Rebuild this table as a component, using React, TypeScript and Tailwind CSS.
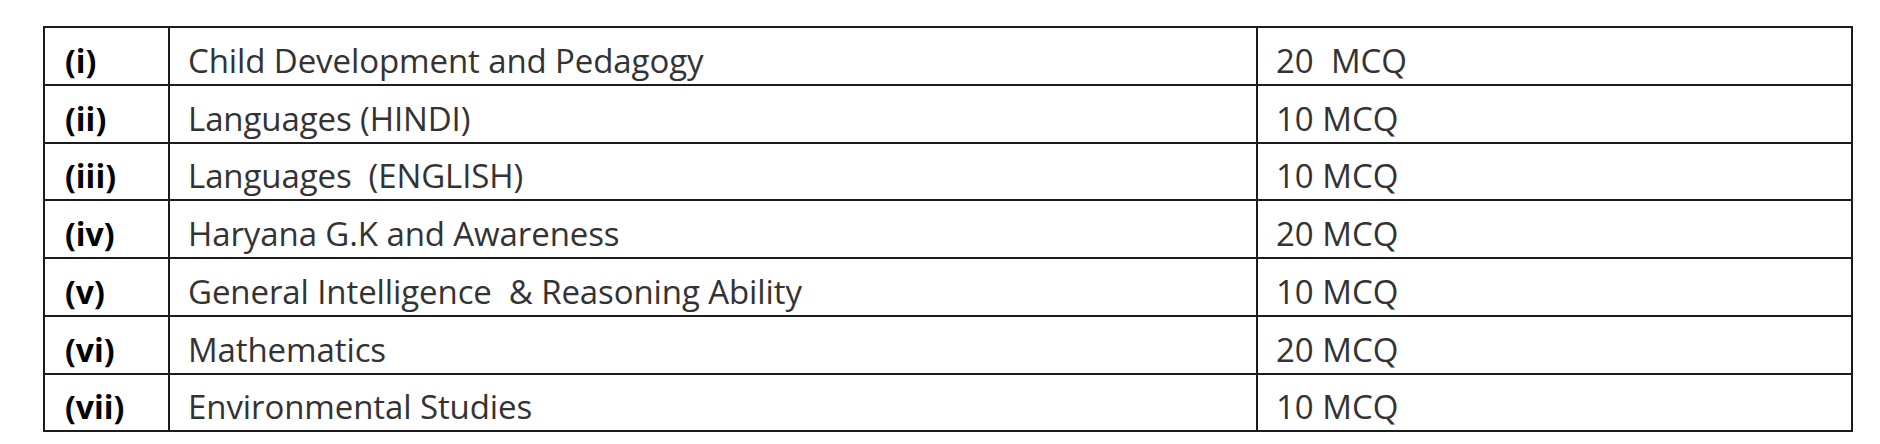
const rows = [
  { no: "(i)", subject: "Child Development and Pedagogy", marks: "20  MCQ" },
  { no: "(ii)", subject: "Languages (HINDI)", marks: "10 MCQ" },
  { no: "(iii)", subject: "Languages  (ENGLISH)", marks: "10 MCQ" },
  { no: "(iv)", subject: "Haryana G.K and Awareness", marks: "20 MCQ" },
  { no: "(v)", subject: "General Intelligence  & Reasoning Ability", marks: "10 MCQ" },
  { no: "(vi)", subject: "Mathematics", marks: "20 MCQ" },
  { no: "(vii)", subject: "Environmental Studies", marks: "10 MCQ" },
];

export default function App() {
  return (
    <div className="w-[1880px] h-[444px] bg-white pt-[26px] pl-[43px] font-['Open_Sans','Noto_Sans',sans-serif]">
      <div className="grid grid-cols-[125px_1088px_595px] w-fit border-l-2 border-t-2 border-[#1c1c1c]">
        {rows.map((r) => (
          <div key={r.no} className="contents">
            <div className="h-[57.75px] border-r-2 border-b-2 border-[#1c1c1c] flex items-end pl-[20px] pb-[7px]">
              <span className="text-[32px] leading-none font-bold text-black whitespace-pre">{r.no}</span>
            </div>
            <div className="h-[57.75px] border-r-2 border-b-2 border-[#1c1c1c] flex items-end pl-[18px] pb-[7px]">
              <span className="text-[33px] leading-none text-[#333] whitespace-pre tracking-[-0.1px]">{r.subject}</span>
            </div>
            <div className="h-[57.75px] border-r-2 border-b-2 border-[#1c1c1c] flex items-end pl-[18px] pb-[7px]">
              <span className="text-[33px] leading-none text-[#333] whitespace-pre">{r.marks}</span>
            </div>
          </div>
        ))}
      </div>
    </div>
  );
}
